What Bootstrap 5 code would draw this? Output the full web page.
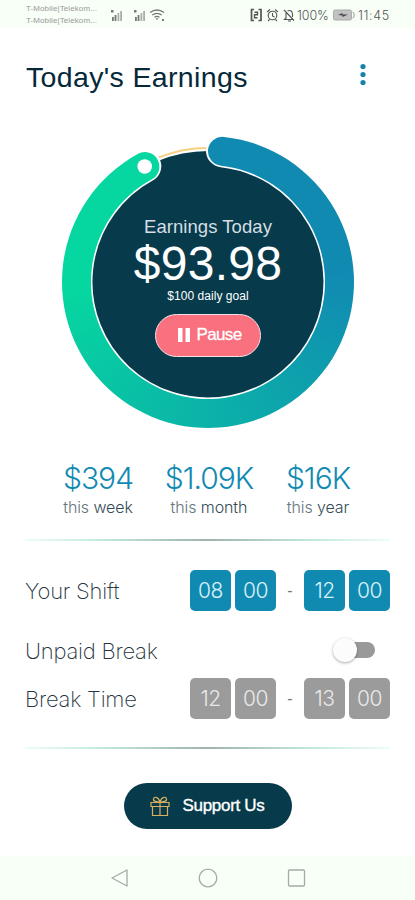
<!DOCTYPE html>
<html lang="en">
<head>
<meta charset="utf-8">
<meta name="viewport" content="width=device-width, initial-scale=1">
<title>Today's Earnings</title>
<link href="https://cdn.jsdelivr.net/npm/bootstrap@5.3.0/dist/css/bootstrap.min.css" rel="stylesheet">
<style>
  :root { --navy:#073b4c; --blue:#118ab2; --green:#06d6a0; --pink:#f9707f; }
  html, body { height:900px; overflow:hidden; }
  body { font-family:"Liberation Sans", Arial, sans-serif; color:var(--navy); line-height:1; background:#fff; }
  svg { display:block; flex:none; }
  .phone { width:415px; height:900px; }
  .status-bar { height:28px; padding:2px 24px 0 26px; background:#f7fff7; color:#777; }
  .carriers { font-size:8px; line-height:12px; letter-spacing:.1px; width:74px; color:#999; }
  .signals { margin-left:10px; }
  .status-text { font:300 12.5px Inter, sans-serif; color:#555; }
  .battery-pct { width:32px; margin-left:1px; letter-spacing:-.1px; }
  .clock { width:33px; margin-left:3px; letter-spacing:.6px; }
  .page-head { height:100px; padding:0 47px 0 26px; }
  .page-title { font-size:28.5px; letter-spacing:.35px; color:#06293a; padding-bottom:1px; }
  .menu-dots { margin-top:-7px; }
  .dial { width:292px; height:292px; margin:8px auto 0 62px; }
  .dial-layer { position:absolute; inset:0; }
  .dial-arc { background:conic-gradient(var(--blue) 0deg, var(--blue) 85deg, var(--green) 265deg, var(--green) 345deg, var(--blue) 350deg);
    clip-path:path("M162.02 .88A146 146 0 1 1 76.11 17.81A14.5 14.5 0 0 1 89.99 43.27A117 117 0 1 0 158.84 29.71A14.5 14.5 0 0 1 162.02 .88Z"); }
  .dial-copy { padding-top:82px; color:#fff; }
  .dial-label { font-size:18.5px; color:#d5dfe3; letter-spacing:.05px; }
  .dial-amount { font-size:48px; margin-top:3px; letter-spacing:.3px; }
  .dial-goal { font-size:12px; margin-top:2px; letter-spacing:.05px; }
  .btn-pause { width:106px; height:43px; margin-top:12px; padding-left:4px !important; border:1.5px solid #f6dfe3; background:var(--pink); color:#fff; font-size:17px; letter-spacing:-.6px; -webkit-text-stroke:.3px #fff; }
  .btn-pause span { margin-left:5px; }
  .totals { margin-top:33px; height:78px; padding:0 26px; }
  .total { font-family:Inter, sans-serif; }
  .total-week { margin-left:36px; width:72px; }
  .total-month { margin-left:30px; width:90px; }
  .total-year { margin-left:29px; width:70px; }
  .total-num { font-size:30px; font-weight:300; color:var(--blue); line-height:34px; letter-spacing:-1px; }
  .total-per { font-size:16px; font-weight:300; color:#66757c; line-height:24px; letter-spacing:-.1px; }
  .total-per span { color:#344b55; }
  .rule { height:2px; margin:0 25px; background:linear-gradient(90deg,#effdf8,#c4eadb 20%,#9fb3b0 50%,#c4eadb 80%,#effdf8); }
  .rule-last { margin-top:28px; margin-bottom:34px; }
  .setting { padding:0 25px 0 26px; height:41px; }
  .setting-shift { margin-top:29px; }
  .setting-break { margin-top:19px; }
  .setting-time { margin-top:7px; }
  .setting-name { font-family:Inter, sans-serif; font-weight:200; font-size:22px; color:#25343e; letter-spacing:-.22px; margin-left:-1px; }
  .slot { width:41px; height:41px; border-radius:5px; background:var(--blue); color:#d9f1f9; font:300 21px Inter, sans-serif; letter-spacing:-.5px; }
  .slot-off .slot { background:#9b9b9b; color:#e9e9e9; }
  .dash { width:28px; font-size:16px; color:#777; }
  .toggle { width:42px; height:24px; margin-right:15px; }
  .toggle-track { width:33px; height:16px; margin-left:9px; border-radius:8px; background:#999; }
  .toggle-knob { position:absolute; left:0; top:0; width:24px; height:24px; border-radius:50%; background:#fcfcfc; box-shadow:0 1px 3px #0005; }
  .toggle { position:relative; margin-top:-2px; }
  .btn-support { width:168px; height:46px; background:var(--navy); color:#fff; font-size:17px; letter-spacing:-.3px; -webkit-text-stroke:.35px #fff; }
  .soft-keys { height:44px; background:#f7fff7; padding:0 109px 0 110px; }
</style>
</head>
<body>
<main class="phone d-flex flex-column">
  <header class="status-bar d-flex align-items-center flex-shrink-0">
    <div class="carriers text-nowrap"><div>T-Mobile|Telekom...</div><div>T-Mobile|Telekom...</div></div>
    <svg class="signals" width="56" height="14" viewBox="0 0 56 14">
      <g fill="#777"><path d="M1 2h2.500v2.500H1zM2 9h1.800v4H2zM4.600 7h1.800v6H4.600z"/><path d="M7.500 5h1.800v8H7.500zM10.200 3H12v10h-1.800z" opacity=".6"/>
      <path d="M24 2h2.500v2.500H24zM25 9h1.800v4H25zM27.600 7h1.800v6h-1.800z"/><path d="M30.500 5h1.800v8h-1.800zM33.200 3H35v10h-1.800z" opacity=".6"/></g>
      <g fill="none" stroke="#777" stroke-width="1.300"><path d="M40 4.500q7-5 14 0M42.300 7q4.700-3.300 9.400 0M44.500 9.300q2.500-1.700 5 0"/></g><path d="M45.500 10.300h3L47 12zM52 11h2v2h-2z" fill="#777"/>
    </svg>
    <div class="d-flex align-items-center ms-auto me-n1 status-text">
      <svg width="46" height="14" viewBox="0 0 46 14" fill="none" stroke="#555" stroke-width="1.100">
        <path d="M4 1.500H1.500v11H4M8.500 1.500H11v11H8.500" stroke-width="1.700"/><path d="M4.500 4.200h3v2.600h-3v3h3" stroke-width="1.400"/>
        <circle cx="22.500" cy="7.500" r="4.300"/><path d="M22.500 5v3l2 1M17 4l3-2.500M25 1.500L28 4M19.500 11.500L18 13M25.500 11.500l1.500 1.500"/>
        <path d="M34 2l10 10.500M36 5v5l-1.500 1.500H43M37.500 3q5-2 5 4v2M38 13h3"/>
      </svg>
      <span class="battery-pct text-nowrap">100%</span>
      <svg class="ms-1" width="22" height="12" viewBox="0 0 22 12"><rect x=".5" y="1" width="18" height="10" rx="1.500" fill="#c2c2c2" stroke="#aaa"/><path d="M19.500 3q1.700 0 1.700 3t-1.700 3" fill="none" stroke="#999"/><path d="M5 6l4.500-2v1.400H15L9.500 8V6.600z" fill="#444"/></svg>
      <span class="clock text-nowrap">11:45</span>
    </div>
  </header>

  <div class="page-head d-flex align-items-center justify-content-between">
    <h1 class="page-title m-0 fw-normal lh-1">Today's Earnings</h1>
    <svg class="menu-dots" width="10" height="24" viewBox="0 0 10 24" fill="#1783aa"><circle cx="5" cy="3.500" r="2.600"/><circle cx="5" cy="11.500" r="2.600"/><circle cx="5" cy="19.500" r="2.600"/></svg>
  </div>

  <section class="dial position-relative flex-shrink-0">
    <svg class="dial-layer" width="292" height="292" viewBox="0 0 292 292">
      <circle cx="146" cy="146" r="134" fill="none" stroke="#f5cf82" stroke-width="2"/>
      <circle cx="146" cy="146" r="131" fill="#073b4c"/>
      <path d="M160.500 14.800A132 132 0 1 1 82.800 30.100" fill="none" stroke="#fff" stroke-width="33" stroke-linecap="round"/>
    </svg>
    <div class="dial-layer dial-arc"></div>
    <svg class="dial-layer" width="292" height="292" viewBox="0 0 292 292"><circle cx="82.700" cy="30.500" r="7.300" fill="#fff"/></svg>
    <div class="dial-copy position-relative d-flex flex-column align-items-center">
      <div class="dial-label">Earnings Today</div>
      <div class="dial-amount">$93.98</div>
      <div class="dial-goal">$100 daily goal</div>
      <button class="btn btn-pause rounded-pill d-flex align-items-center justify-content-center p-0">
        <svg width="13" height="14" viewBox="0 0 13 14" fill="#fff"><path d="M0 0h4.500v14H0zM7.500 0H12v14H7.500z"/></svg><span>Pause</span>
      </button>
    </div>
  </section>

  <section class="totals d-flex text-center">
    <div class="total total-week"><div class="total-num">$394</div><div class="total-per text-nowrap">this <span>week</span></div></div>
    <div class="total total-month"><div class="total-num">$1.09K</div><div class="total-per text-nowrap">this <span>month</span></div></div>
    <div class="total total-year"><div class="total-num">$16K</div><div class="total-per text-nowrap">this <span>year</span></div></div>
  </section>
  <div class="rule"></div>

  <section>
    <div class="setting setting-shift d-flex align-items-center justify-content-between">
      <div class="setting-name">Your Shift</div>
      <div class="d-flex align-items-center">
        <div class="slot d-flex align-items-center justify-content-center">08</div><div class="slot d-flex align-items-center justify-content-center ms-1">00</div>
        <div class="dash text-center">-</div>
        <div class="slot d-flex align-items-center justify-content-center">12</div><div class="slot d-flex align-items-center justify-content-center ms-1">00</div>
      </div>
    </div>
    <div class="setting setting-break d-flex align-items-center justify-content-between">
      <div class="setting-name">Unpaid Break</div>
      <div class="toggle d-flex align-items-center"><div class="toggle-track"></div><div class="toggle-knob"></div></div>
    </div>
    <div class="setting setting-time slot-off d-flex align-items-center justify-content-between">
      <div class="setting-name">Break Time</div>
      <div class="d-flex align-items-center">
        <div class="slot d-flex align-items-center justify-content-center">12</div><div class="slot d-flex align-items-center justify-content-center ms-1">00</div>
        <div class="dash text-center">-</div>
        <div class="slot d-flex align-items-center justify-content-center">13</div><div class="slot d-flex align-items-center justify-content-center ms-1">00</div>
      </div>
    </div>
  </section>
  <div class="rule rule-last"></div>

  <button class="btn btn-support rounded-pill d-flex align-items-center justify-content-center p-0 mx-auto border-0">
    <svg width="20" height="21" viewBox="0 0 20 21" fill="none" stroke="#d9ae5c" stroke-width="1.200"><path d="M1 6.500h18v4H1zM2.500 10.500h15V19.500h-15zM10 6.500v13M10 6C7 6 3 5.500 3.500 3s4.500-3 6.500 3c2-6 6-5.500 6.500-3s-3.500 3-6.500 3"/></svg>
    <span class="ms-2 ps-1">Support Us</span>
  </button>

  <footer class="soft-keys d-flex align-items-center justify-content-between mt-auto">
    <svg width="19" height="20" viewBox="0 0 19 20" fill="none" stroke="#a5aaa5" stroke-width="1.300"><path d="M17 2v16L2 10z" stroke-linejoin="round"/></svg>
    <svg width="20" height="20" viewBox="0 0 20 20" fill="none" stroke="#a5aaa5" stroke-width="1.300"><circle cx="10" cy="10" r="8.800"/></svg>
    <svg width="19" height="20" viewBox="0 0 19 20" fill="none" stroke="#a5aaa5" stroke-width="1.300"><rect x="1.500" y="2" width="16" height="16" rx="1"/></svg>
  </footer>
</main>
<script src="https://cdn.jsdelivr.net/npm/bootstrap@5.3.0/dist/js/bootstrap.bundle.min.js"></script>
</body>
</html>
